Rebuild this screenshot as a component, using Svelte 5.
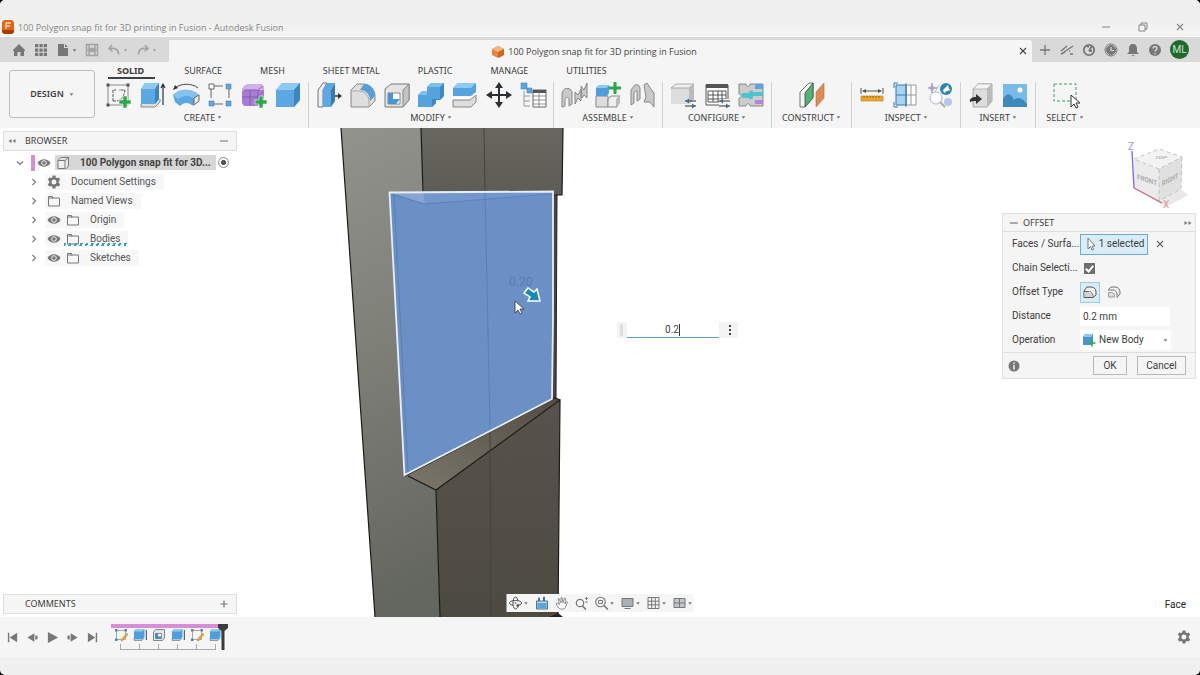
<script lang="ts">
	interface ToolGroup {
		label: string;
		tools: string[];
	}

	interface TreeNode {
		label: string;
		icon: string;
		eye?: boolean;
		pending?: boolean;
	}

	const tabs = ['SOLID', 'SURFACE', 'MESH', 'SHEET METAL', 'PLASTIC', 'MANAGE', 'UTILITIES'];
	let activeTab = $state('SOLID');

	const groups: ToolGroup[] = [
		{ label: 'CREATE', tools: ['sketch', 'extrude', 'revolve', 'pattern', 'form', 'box'] },
		{ label: 'MODIFY', tools: ['presspull', 'fillet', 'shell', 'combine', 'split', 'move', 'params'] },
		{ label: 'ASSEMBLE', tools: ['joint', 'component', 'asbuilt'] },
		{ label: 'CONFIGURE', tools: ['configure', 'table', 'puzzle'] },
		{ label: 'CONSTRUCT', tools: ['plane'] },
		{ label: 'INSPECT', tools: ['measure', 'section', 'analysis'] },
		{ label: 'INSERT', tools: ['derive', 'image'] },
		{ label: 'SELECT', tools: ['select'] }
	];

	const tree: TreeNode[] = [
		{ label: 'Document Settings', icon: 'gear' },
		{ label: 'Named Views', icon: 'folder' },
		{ label: 'Origin', icon: 'folder', eye: true },
		{ label: 'Bodies', icon: 'folder', eye: true, pending: true },
		{ label: 'Sketches', icon: 'folder', eye: true }
	];

	const accountTools = ['plus', 'extensions', 'jobs', 'clock', 'bell', 'help'];
	const playback = ['first', 'prev', 'play', 'next', 'last'];
	const features = ['fsketch', 'fextrude', 'fshell', 'fextrude', 'fsketch', 'fextrude'];
	const navTools = [
		{ name: 'orbit', menu: true },
		{ name: 'lookat', menu: false },
		{ name: 'pan', menu: false },
		{ name: 'zoom', menu: false },
		{ name: 'fit', menu: true },
		{ name: 'display', menu: true },
		{ name: 'grid', menu: true },
		{ name: 'viewports', menu: true }
	];

	let chain = $state(true);
	let distance = $state('0.2 mm');
	let quickValue = $state('0.2');
	let operation = $state('New Body');
</script>

{#snippet caret()}
	<svg class="caret" viewBox="0 0 6 6"><path d="M0.8 1.5h4.4L3 4.6z" fill="currentColor" /></svg>
{/snippet}

{#snippet tool(name: string)}
	<svg class="tool-icon" viewBox="0 0 26 26" fill="none" stroke-linejoin="round">
		{#if name === 'sketch'}
			<path d="M3 3h20v20H3z" stroke="#8a8a8a" />
			<path d="M8 19V8h3M8 19h4c5-1 7-5 8-11h-6" stroke="#555" stroke-dasharray="3 1" />
			<path d="M1.500 1.500h3v3h-3zM21.500 1.500h3v3h-3zM1.500 21.500h3v3h-3z" fill="#555" />
			<path d="M18 14h4v4h4v4h-4v4h-4v-4h-4v-4h4z" fill="#2ba84a" stroke="#f5f5f5" stroke-width=".6" />
		{:else if name === 'extrude'}
			<path d="M2 22v3h14l5-5v-3" fill="#ddd" stroke="#888" />
			<path d="M2 7l4-6h14v16l-4 5H2z" fill="#5ba8e2" />
			<path d="M2 7l4-6h14l-4 6z" fill="#8dcaf2" />
			<path d="M16 7l4-6v16l-4 5z" fill="#3b84bf" />
			<path d="M24 23V3M22 6l2-4 2 4" stroke="#333" stroke-width="1.200" />
		{:else if name === 'revolve'}
			<path d="M2 6c6-5 17-5 23 0" stroke="#444" />
			<path d="M0 8l2-5 3 3z" fill="#333" />
			<path d="M0 13c7-7 19-7 26 0l-6 11c-4-4-9-4-13 0l-5-4z" fill="#5ba8e2" />
			<path d="M0 13c7-7 19-7 26 0l-5 4c-4-4-11-4-16 0z" fill="#83c3ee" />
			<path d="M21 16l5-3v6l-5 4z" fill="#eee" stroke="#666" />
		{:else if name === 'pattern'}
			<path d="M4 7v12M7 4h12M22 7v12M7 22h12" stroke="#666" stroke-dasharray="9 3" />
			<path d="M2 2h5v5H2z" fill="#fff" stroke="#666" />
			<path d="M19 2h5v5h-5zM2 19h5v5H2zM19 19h5v5h-5z" fill="#61a5dc" stroke="#4a88bb" stroke-width=".6" />
		{:else if name === 'form'}
			<path d="M1 9c0-4 4-7 8-7h9c4 0 5 3 5 6v7c0 5-4 9-8 9H5c-3 0-4-2-4-4z" fill="#a97bd3" />
			<path d="M1 9c0-4 4-7 8-7h9c4 0 5 3 5 6l-6 0H5z" fill="#cfb0e8" />
			<path d="M3 8h13c1 0 1 1 1 1v14M9 8v15M1 15h16l5-5M17 8l5-4" stroke="#7a54a8" stroke-width=".8" />
			<path d="M18 14h4v4h4v4h-4v4h-4v-4h-4v-4h4z" fill="#2ba84a" stroke="#f5f5f5" stroke-width=".6" />
		{:else if name === 'box'}
			<path d="M1 8l6-7h18v17l-6 7H1z" fill="#5ba8e2" />
			<path d="M1 8l6-7h18l-6 7z" fill="#8dcaf2" />
			<path d="M19 8l6-7v17l-6 7z" fill="#3c86c2" />
		{:else if name === 'presspull'}
			<path d="M2 8l5-7h4L7 8v17H2z" fill="#eee" stroke="#777" />
			<path d="M7 8l4-7h8l-4 7v17H7z" fill="#5ba8e2" />
			<path d="M15 8l4-7v18l-4 6z" fill="#3878b0" />
			<path d="M19 14h5" stroke="#333" stroke-width="1.500" />
			<path d="M22 11l4 3-4 3z" fill="#333" />
		{:else if name === 'fillet'}
			<path d="M1 8l6-6h6c7 0 12 6 12 12v5l-6 6H1z" fill="#dedede" stroke="#888" />
			<path d="M1 9h8c6 0 10 5 10 10v5" stroke="#aaa" />
			<path d="M10 8l4-6c7 0 11 6 11 12l-5 5c0-7-4-11-10-11z" fill="#55a0da" />
		{:else if name === 'shell'}
			<path d="M1 7l6-5h18v16l-6 7H1z" fill="#e4e4e4" stroke="#777" />
			<path d="M19 8l6-6v16l-6 7z" fill="#c4c4c4" stroke="#888" />
			<path d="M4 11h12v11H4z" fill="#fff" stroke="#888" />
			<path d="M4 11h5v6h7l-4 5H4z" fill="#4795d2" />
		{:else if name === 'combine'}
			<path d="M0 13l4-4h5V5l4-4h13v13l-4 4h-4v3l-4 4H0z" fill="#55a3de" />
			<path d="M0 13l4-4h5V5l4-4h13l-4 4H9v8z" fill="#80c0ed" />
			<path d="M22 5l4-4v13l-4 4h-4v3l-4 4v-8h8z" fill="#3d88c5" />
		{:else if name === 'split'}
			<path d="M1 6l5-5h18v9l-5 4H1z" fill="#55a3de" />
			<path d="M1 6l5-5h18l-5 5z" fill="#8dcaf2" />
			<path d="M1 18h17l6-5v7l-5 5H1z" fill="#ddd" stroke="#888" />
			<path d="M0 16h18l7-5" stroke="#fff" stroke-width="1.500" />
		{:else if name === 'move'}
			<path d="M13 3v20M3 13h20" stroke="#2c2f33" stroke-width="2" />
			<path d="M13 0l4 6H9zM13 26l4-6H9zM0 13l6-4v8zM26 13l-6-4v8z" fill="#2c2f33" />
		{:else if name === 'params'}
			<path d="M1 1h6v6H1zM7 6h5v5H7z" fill="#5ca4dc" stroke="#4a88bb" stroke-width=".6" />
			<path d="M4 9v15h6M4 14h6M4 19h6" stroke="#999" />
			<path d="M13 8h13v17H13z" fill="#fff" stroke="#666" />
			<path d="M13 8h13v3H13z" fill="#555" />
			<path d="M13 14h13M13 18h13M13 22h13M19 10v15" stroke="#777" stroke-width=".8" />
		{:else if name === 'joint'}
			<path d="M1 25V12c0-6 8-8 10-2v12l-3 2v-7c-1-2-3-2-4 0v7z" fill="#c9c9c9" stroke="#888" />
			<path d="M14 10l3 3 3-6v12l-3-3-3 6zM20 4l3 4 3-7v15l-3-3-2 3z" fill="#c9c9c9" stroke="#888" />
		{:else if name === 'component'}
			<path d="M1 14h12v11H1z" fill="#ddd" stroke="#888" />
			<path d="M13 17l3-3h9l-3 3v8h-9z" fill="#eee" stroke="#888" />
			<path d="M22 17l3-3v7l-3 4z" fill="#bbb" />
			<path d="M1 6l3-3h10v8l-2 3H1z" fill="#4f9edb" />
			<path d="M1 6l3-3h10l-2 3z" fill="#8dcaf2" />
			<path d="M18.500 0h3v4.500H26v3h-4.500V12h-3V7.500H14v-3h4.500z" fill="#2ba84a" />
		{:else if name === 'asbuilt'}
			<path d="M2 23V8l4-5c3-1 5 1 5 4v10l-3 2V9c-2-1-3 1-3 4v8z" fill="#c9c9c9" stroke="#888" />
			<path d="M15 3l3-2 4 6 3 4v14l-4-5h-6l2-5z" fill="#c9c9c9" stroke="#888" />
		{:else if name === 'configure'}
			<path d="M1 6l5-4h18v15l-5 5H1z" fill="#ddd" />
			<path d="M1 6l5-4h18l-5 4z" fill="#eee" stroke="#999" stroke-width=".8" />
			<path d="M19 6l5-4v15l-5 5z" fill="#bbb" />
			<path d="M15 19h11M15 24h11" stroke="#333" stroke-width="1.200" />
			<path d="M19 16.500v5L15.500 19zM22 21.500v5l3.500-2.500z" fill="#3a6f99" />
		{:else if name === 'table'}
			<path d="M2 3h22v20H2z" fill="#fff" stroke="#555" />
			<path d="M2 2h22v4H2z" fill="#555" />
			<path d="M4 9h18v11H4zM4 13h18M4 17h18M9 9v11M14 9v11M18 9v11" stroke="#555" />
			<path d="M15 17h11v9H15z" fill="#f5f5f5" />
			<path d="M15 19h11M15 24h11" stroke="#333" stroke-width="1.200" />
			<path d="M19 16.500v5L15.500 19zM22 21.500v5l3.500-2.500z" fill="#3a6f99" />
		{:else if name === 'puzzle'}
			<path d="M1 2h7c0 3 4 3 4 0h13v22H12c0-3-4-3-4 0H1v-8c3 0 3-4 0-4z" fill="#ccc" stroke="#888" />
			<path d="M17 2h8v5h-8z" fill="#5fa3da" />
			<path d="M5 11h6c0-3 4-3 4-1h10v4H15c1 4-4 4-4 2H5c-2 0-2-5 0-5z" fill="#4cc4d0" />
			<path d="M17 18h8v4h-8z" fill="#b384d8" />
		{:else if name === 'plane'}
			<path d="M1 10l9-9h4v14l-8 10H1z" fill="#f4f4f4" stroke="#777" />
			<path d="M6 11l8-10v15l-8 9z" fill="#4db676" stroke="#444" stroke-width=".8" />
			<path d="M17 10l8-9v15l-8 9z" fill="#df8a55" stroke="#b66b3c" stroke-width=".6" />
		{:else if name === 'measure'}
			<path d="M2 6v6M24 6v6M4 9h18" stroke="#555" />
			<path d="M3 9l4-2v4zM23 9l-4-2v4z" fill="#555" />
			<path d="M2 14h22v5H2z" fill="#eda52d" stroke="#bb7d1a" stroke-width=".6" />
			<path d="M5 14v2M8 14v2M11 14v2M14 14v2M17 14v2M20 14v2" stroke="#8a5b0d" stroke-width=".8" />
		{:else if name === 'section'}
			<path d="M13 3h10v20H13zM13 13h10M18 3v20" fill="#fff" stroke="#999" />
			<path d="M3 3h10v20H3zM3 13h10" fill="#a8d4f5" stroke="#3879ad" />
			<path d="M13 1v24M1 6V1h4M1 20v5h4" stroke="#3879ad" />
		{:else if name === 'analysis'}
			<path d="M5 1l1 4 4 1-4 1-1 4-1-4-3-1 3-1zM12 3l-4 7" fill="#a8a0d0" stroke="#a8a0d0" stroke-width=".8" />
			<circle cx="9" cy="16" r="6" fill="#fff" stroke="#b7b7c4" />
			<path d="M13 20l5 5" stroke="#aaa" stroke-width="2" />
			<circle cx="19" cy="7" r="6" fill="#2c86ad" />
			<path d="M16 8l5-5 1 4 2 1-4 1-3 2z" fill="#fff" />
			<circle cx="21" cy="20" r="4" fill="#b9c8e6" />
		{:else if name === 'derive'}
			<path d="M5 7l5-5h14v17l-5 6H5z" fill="#ddd" stroke="#999" stroke-width=".8" />
			<path d="M19 7l5-5v17l-5 6z" fill="#bbb" />
			<path d="M5 7l5-5h14l-5 5z" fill="#f5f5f5" stroke="#999" stroke-width=".6" />
			<path d="M2 20c-1-3 2-5 6-5v-3l6 5-6 5v-3c-3 0-4 0-6 1z" fill="#333" />
		{:else if name === 'image'}
			<path d="M1 2h24v23H1z" fill="#78bbea" />
			<path d="M1 25V17c4-8 9-5 11 1 4-4 9-2 13 4v3z" fill="#3e88bd" />
			<circle cx="18" cy="8" r="2.500" fill="#fff" />
		{:else if name === 'select'}
			<path d="M2 2h22v17H2z" stroke="#4a9b65" stroke-dasharray="3 2" />
			<path d="M19 13v12l3-3 2 4 2-1-2-4h4z" fill="#fff" stroke="#333" />
		{/if}
	</svg>
{/snippet}

{#snippet icon(name: string)}
	<svg class="icon" viewBox="0 0 14 14" fill="none" stroke="currentColor">
		{#if name === 'home'}
			<path d="M1 7l6-6 6 6v1h-1v5H8.500V9h-3v4H2V8H1z" fill="currentColor" stroke="none" />
		{:else if name === 'apps'}
			<path d="M1 1h3.300v3.300H1zM5.400 1h3.300v3.300H5.400zM9.700 1H13v3.300H9.700zM1 5.400h3.300v3.300H1zM5.400 5.400h3.300v3.300H5.400zM9.700 5.400H13v3.300H9.700zM1 9.700h3.300V13H1zM5.400 9.700h3.300V13H5.400zM9.700 9.700H13V13H9.700z" fill="currentColor" stroke="none" />
		{:else if name === 'file'}
			<path d="M2 1h6v4h4v8H2zM9 1l3 3H9z" fill="currentColor" stroke="none" />
		{:else if name === 'save'}
			<path d="M1.500 1.500h11v11h-11zM4 1.500v4h6v-4M4 12.500v-4h6v4M1.500 7h11" stroke-width="1.500" />
		{:else if name === 'undo'}
			<path d="M5 2L2 5.500 5.500 8M2.500 5.500c6-1 9 1 9 6" stroke-width="1.600" />
		{:else if name === 'redo'}
			<path d="M9 2l3 3.500L8.500 8M11.500 5.500c-6-1-9 1-9 6" stroke-width="1.600" />
		{:else if name === 'close'}
			<path d="M4 4l6 6M10 4l-6 6" stroke-width="1.100" />
		{:else if name === 'minus'}
			<path d="M3 7h8" stroke-width="1.200" />
		{:else if name === 'restore'}
			<path d="M3 5h6v6H3zM5 5V3h6v6H9" />
		{:else if name === 'plus'}
			<path d="M7 2v10M2 7h10" stroke-width="1.300" />
		{:else if name === 'smallplus'}
			<path d="M7 3.500v7M3.500 7h7" stroke-width="1.200" />
		{:else if name === 'extensions'}
			<path d="M1 8l6-5M4 9l9-6M1 11l4-2M10 11h3M9 8h1" stroke-width="1.500" />
		{:else if name === 'jobs'}
			<circle cx="7" cy="7" r="5.200" stroke-width="1.800" />
			<path d="M7 8l3-5M4 3l3 1M7 8l3 0" stroke-width="1.800" />
		{:else if name === 'clock'}
			<circle cx="7" cy="7" r="6" />
			<circle cx="7" cy="7" r="4.500" fill="currentColor" />
			<path d="M7 4v3.500h3" stroke="#d9d9d9" stroke-width="1.200" />
		{:else if name === 'bell'}
			<path d="M7 1c3 0 4 2 4 5v3l2 2H1l2-2V6c0-3 1-5 4-5zM5.500 12h3L7 13.500z" fill="currentColor" stroke="none" />
		{:else if name === 'help'}
			<circle cx="7" cy="7" r="6" fill="currentColor" stroke="none" />
			<path d="M5 5.500C5 3 9 3 9 5.300 9 7 7 6.800 7 8.500M7 10v1.200" stroke="#e5e5e5" stroke-width="1.300" />
		{:else if name === 'collapse'}
			<path d="M6.500 5v4L3.500 7zM10.500 5v4l-3-2z" fill="currentColor" stroke="none" />
		{:else if name === 'expand'}
			<path d="M3.500 5v4l3-2zM7.500 5v4l3-2z" fill="currentColor" stroke="none" />
		{:else if name === 'down'}
			<path d="M4 5.500l3 3 3-3" stroke-width="1.200" />
		{:else if name === 'right'}
			<path d="M5.500 4l3 3-3 3" stroke-width="1.100" />
		{:else if name === 'eye'}
			<path d="M.5 7c3-5 10-5 13 0-3 5-10 5-13 0z" fill="currentColor" stroke="none" />
			<circle cx="7" cy="7" r="2.300" stroke="#f2f2f2" />
		{:else if name === 'gear'}
			<path d="M5.600.5h2.800l.4 1.900 1.200.6 1.800-.6 1.400 2.300-1.400 1.300v2l1.400 1.300-1.400 2.300-1.800-.6-1.200.6-.4 1.900H5.600l-.4-1.900-1.200-.6-1.800.6L.8 9.300 2.200 8V6L.8 4.700l1.400-2.300 1.800.6 1.200-.6zM7 4.500a2.500 2.500 0 100 5 2.500 2.500 0 000-5z" fill="currentColor" fill-rule="evenodd" stroke="none" />
		{:else if name === 'folder'}
			<path d="M1.500 4V2.500h4V4h7v8h-11zM1.500 4h5" />
		{:else if name === 'part'}
			<path d="M2 4.500L5 1.500h7.500V8c0 3-1 4.500-4 4.500H2zM2 4.500h6.500c1 0 1.500 0 4-3M9 4.500v8" fill="#eee" />
		{:else if name === 'first'}
			<path d="M2 2h1.500v10H2zM12 2v10L4 7z" fill="currentColor" stroke="none" />
		{:else if name === 'prev'}
			<path d="M9 2.500v9L1.500 7zM10 4.500l2.500.8v3.400l-2.500.8z" fill="currentColor" stroke="none" />
		{:else if name === 'play'}
			<path d="M2 1l11 6-11 6z" fill="currentColor" stroke="none" />
		{:else if name === 'next'}
			<path d="M5 2.500v9L12.500 7zM4 4.500l-2.500.8v3.400l2.500.8z" fill="currentColor" stroke="none" />
		{:else if name === 'last'}
			<path d="M10.500 2H12v10h-1.500zM2 2v10l8-5z" fill="currentColor" stroke="none" />
		{:else if name === 'fsketch'}
			<path d="M2.500 2.500h9v9h-9z" stroke="#aaa" />
			<path d="M1 1h2.500v2.500H1zM10.500 1H13v2.500h-2.500zM1 10.500h2.500V13H1z" fill="#5a84a8" stroke="none" />
			<path d="M13 5l1 1.500-5 6-2 .5.500-2z" fill="#e8a436" stroke="#b57d28" stroke-width=".4" />
		{:else if name === 'fextrude'}
			<path d="M1 10.500v2h8l2-2" stroke="#999" />
			<path d="M1 3.500L3 1h8.500v8l-2 2.500H1z" fill="#4f9edb" stroke="none" />
			<path d="M1 3.500L3 1h8.500l-2 2.500z" fill="#8dc9f0" stroke="none" />
			<path d="M13.300 2v10" stroke="#444" />
		{:else if name === 'fshell'}
			<path d="M1.500 4l2-2.500h9V10l-2 2.500h-9z" fill="#e5e5e5" stroke="#7c8894" />
			<path d="M3.500 5.500h6v5h-6z" fill="#fff" stroke="#7c8894" />
			<path d="M3.500 5.500h2.500v3h3v2h-5.500z" fill="#3f88c0" stroke="none" />
		{:else if name === 'orbit'}
			<path d="M4.500 9.300C2.500 8.900 1 8 1 7c0-1.500 2.700-2.500 6-2.500s6 1 6 2.500-2 2.300-4.500 2.500" stroke="#444" />
			<path d="M9.300 4.500C8.900 2.500 8 1 7 1 5.500 1 4.500 3.700 4.500 7s1 6 2.500 6c1 0 1.800-1 2.200-2.500" stroke="#444" />
			<path d="M10 7.500v4L7.500 9.500z" fill="#444" stroke="none" />
			<circle cx="7" cy="7" r=".8" fill="#444" stroke="none" />
		{:else if name === 'lookat'}
			<path d="M2 13V5h11v8zM4 5V2h1v3M9 5V1h1v4" fill="#b7dbf2" stroke="#4d7186" />
			<path d="M3 7h9v5H3z" fill="#5aa3d8" stroke="none" />
		{:else if name === 'pan'}
			<path d="M4 12L1.500 7.500l1-.5L5 8.500 3.500 3l1-.5L6.500 7V1.500h1L8.500 7l1.500-5 1 .3L10.500 8 12 5.500l1 .5-2 5-1.500 2h-4z" fill="#fff" stroke="#777" stroke-width=".8" />
		{:else if name === 'zoom'}
			<circle cx="5.500" cy="7" r="3.700" stroke="#777" stroke-width="1.200" />
			<path d="M8 10l3.500 3.500" stroke="#777" stroke-width="1.600" />
			<path d="M10.500 2.500h3M12 1v3M10.500 6h3" stroke="#666" stroke-width=".8" />
		{:else if name === 'fit'}
			<circle cx="6" cy="6" r="4.800" stroke="#777" stroke-width="1.100" />
			<path d="M4 4.500h4v3H4z" stroke="#777" />
			<path d="M9.500 9.500l4 4" stroke="#777" stroke-width="1.600" />
		{:else if name === 'display'}
			<path d="M1.500 2.500h11v8h-11z" fill="#a9b0b4" stroke="#777" />
			<path d="M4 12.500h6" stroke="#777" stroke-width="1.200" />
		{:else if name === 'grid'}
			<path d="M1.500 1.500h11v11h-11zM5.200 1.500v11M8.800 1.500v11M1.500 5.200h11M1.500 8.800h11" stroke="#777" />
		{:else if name === 'viewports'}
			<path d="M1.500 2.500h11v9h-11z" fill="#c3c6c8" stroke="#777" />
			<path d="M7 2.500v9M1.500 7h11" stroke="#777" />
		{:else if name === 'pointer'}
			<path d="M4 1v11l2.500-2.500L8 13l1.500-.7L8.200 9H11z" fill="#fff" stroke="#777" />
		{:else if name === 'rounded'}
			<path d="M1 6l3-4h4c3 0 5 2 5 5v3l-3 2.500H1z" fill="#f0f0f0" stroke="#555" />
			<path d="M1 6.500h4.500c3 0 4.500 2 4.500 6" stroke="#666" />
			<path d="M1.500 7h4c2.500 0 4 2 4 5h-8z" fill="#d3d3d3" stroke="none" />
		{:else if name === 'sharp'}
			<path d="M1 5l3-3h4c3 0 5 2 5 5v2l-3 3.500V9C10 7 8 5 6 5z" fill="#eee" stroke="#777" />
			<path d="M1.500 7.500h3c2 0 3 1.500 3 4.500h-6z" fill="#ddd" stroke="#999" />
		{:else if name === 'newbody'}
			<path d="M1 4l2-3h8v7l-2 4H1z" fill="#4796d2" stroke="none" />
			<path d="M1 4l2-3h8L9 4z" fill="#8dc9f0" stroke="none" />
			<path d="M10 6.500v7M6.500 10h7" stroke="#2ba84a" stroke-width="1.600" />
		{:else if name === 'info'}
			<circle cx="7" cy="7" r="5.500" fill="currentColor" stroke="none" />
			<path d="M7 3.500v1.500M7 6v4.500" stroke="#f0f0f0" stroke-width="1.500" />
		{:else if name === 'dots'}
			<path d="M6 2h2v2H6zM6 6h2v2H6zM6 10h2v2H6z" fill="currentColor" stroke="none" />
		{/if}
	</svg>
{/snippet}

<div class="window">
	<header class="title-bar">
		<svg class="logo" viewBox="0 0 12 14">
			<path d="M2 0h8l2 2v10l-2 2H2l-2-2V2z" fill="#e8650f" />
			<path d="M0 10h12v2l-2 2H2l-2-2z" fill="#a63c06" />
			<path d="M4 9V3h5M4 6h4" fill="none" stroke="#fbd9bd" stroke-width="1.300" />
		</svg>
		<span class="window-title">100 Polygon snap fit for 3D printing in Fusion - Autodesk Fusion</span>
		<div class="window-buttons">
			<button aria-label="Minimize">{@render icon('minus')}</button>
			<button aria-label="Restore">{@render icon('restore')}</button>
			<button aria-label="Close">{@render icon('close')}</button>
		</div>
	</header>

	<div class="doc-strip">
		<div class="quick-access">
			<button aria-label="Home">{@render icon('home')}</button>
			<button aria-label="Data panel">{@render icon('apps')}</button>
			<button aria-label="File">{@render icon('file')}{@render caret()}</button>
			<button class="faded" aria-label="Save">{@render icon('save')}</button>
			<button class="faded" aria-label="Undo">{@render icon('undo')}{@render caret()}</button>
			<button class="faded" aria-label="Redo">{@render icon('redo')}{@render caret()}</button>
		</div>
		<div class="doc-tab">
			<div class="doc-name">
				<svg class="doc-icon" viewBox="0 0 12 12">
					<path d="M6 0l6 3v6l-6 3-6-3V3z" fill="#e48a3c" />
					<path d="M6 0l6 3-6 3-6-3z" fill="#f5b478" />
					<path d="M6 6l6-3v6l-6 3z" fill="#c96a22" />
				</svg>
				<span>100 Polygon snap fit for 3D printing in Fusion</span>
			</div>
			<button aria-label="Close document">{@render icon('close')}</button>
		</div>
		<div class="account">
			{#each accountTools as name}
				<button aria-label={name}>{@render icon(name)}</button>
			{/each}
			<button class="avatar">ML</button>
		</div>
	</div>

	<div class="ribbon">
		<button class="workspace">DESIGN {@render caret()}</button>
		<div class="ribbon-main">
			<nav class="tabs">
				{#each tabs as tab}
					<button class="tab" class:active={tab === activeTab} onclick={() => (activeTab = tab)}>{tab}</button>
				{/each}
			</nav>
			<div class="groups">
				{#each groups as group}
					<section class="group">
						<div class="tools">
							{#each group.tools as name}
								<button aria-label={name}>{@render tool(name)}</button>
							{/each}
						</div>
						<button class="group-label">{group.label} {@render caret()}</button>
					</section>
				{/each}
			</div>
		</div>
	</div>

	<main class="canvas">
		<svg class="model" viewBox="0 0 1200 489" preserveAspectRatio="xMidYMin slice">
			<defs>
				<linearGradient id="side" x1="0" y1="0" x2="0.1" y2="1">
					<stop offset="0" stop-color="#92938c" />
					<stop offset="0.5" stop-color="#7d7e76" />
					<stop offset="1" stop-color="#646660" />
				</linearGradient>
				<linearGradient id="upper" x1="0" y1="0" x2="0" y2="1">
					<stop offset="0" stop-color="#67675f" />
					<stop offset="1" stop-color="#5b5a53" />
				</linearGradient>
				<linearGradient id="ledge" x1="0" y1="1" x2="1" y2="0">
					<stop offset="0" stop-color="#7b776b" />
					<stop offset="1" stop-color="#514d43" />
				</linearGradient>
				<linearGradient id="front" x1="0" y1="0" x2="0" y2="1">
					<stop offset="0" stop-color="#57534a" />
					<stop offset="1" stop-color="#4d4a42" />
				</linearGradient>
			</defs>
			<path d="M341 0h81l3 76-17 272 28 14 4 127h-65z" fill="url(#side)" />
			<path d="M421 0h142l-1 67h-6l-132 9z" fill="url(#upper)" />
			<path d="M553 67h4l-1 204-4 1z" fill="#4b463d" stroke="#24221e" />
			<path d="M405 347l150-77 5 2-124 90z" fill="url(#ledge)" />
			<path d="M436 362l124-90-2 217H440z" fill="url(#front)" />
			<path d="M341 0l34 489M421 0l2 64M563 0l-1 67h-6M408 348l28 14 124-90-5-2-150 78M436 362l4 127M560 272l-2 217" fill="none" stroke="#1b1b19" stroke-width="1.200" />
			<path d="M484 0l1 64M490 304l1 185" stroke="#45433d" fill="none" />
			<path d="M549 489l9-4 5 4z" fill="#222" />
			<path d="M389 64l164-1v127l-1 81-148 76z" fill="#6a90c5" />
			<path d="M389 64l164-1v4l-128 9z" fill="#7396cd" />
			<path d="M389 64h34l2 12z" fill="#87a4d2" />
			<path d="M391 66l34 10 128-10M394 67l14 278M485 64l5 237" fill="none" stroke="#5079b8" stroke-width=".7" />
			<path d="M389.500 64.500L553 63.500V190l-1 81-147.500 76z" fill="none" stroke="#e9eef4" stroke-width="1.800" />
			<text x="509" y="158" class="ghost">0.20</text>
			<path d="M524 165l4-5 6 4 3-3 3 12-12 0 2-4z" fill="#198cad" stroke="#fff" stroke-width="1.500" />
			<path d="M515 173v12l3-3 2 4 2-1-2-4h4z" fill="#fff" stroke="#333" stroke-width=".8" />
		</svg>

		<aside class="left-dock">
			<section>
				<h2 class="panel-head">
					{@render icon('collapse')}
					<span>BROWSER</span>
					<button aria-label="Collapse browser">{@render icon('minus')}</button>
				</h2>
				<ul class="tree">
					<li class="root">
						<button aria-label="Collapse">{@render icon('down')}</button>
						<i class="marker"></i>
						{@render icon('eye')}
						<div class="root-name">
							{@render icon('part')}
							<span>100 Polygon snap fit for 3D...</span>
						</div>
						<input type="radio" checked aria-label="Activate component" />
					</li>
					{#each tree as node}
						<li>
							<button aria-label="Expand">{@render icon('right')}</button>
							<div class="node">
								{#if node.eye}{@render icon('eye')}{/if}
								<span class="node-name" class:pending={node.pending}>
									{@render icon(node.icon)}
									<span>{node.label}</span>
								</span>
							</div>
						</li>
					{/each}
				</ul>
			</section>
			<h2 class="panel-head comments">
				<span>COMMENTS</span>
				<button aria-label="Add comment">{@render icon('smallplus')}</button>
			</h2>
		</aside>

		<form class="value-box" onsubmit={(e) => e.preventDefault()}>
			<i class="grip"></i>
			<div class="value">
				<input aria-label="Offset distance" bind:value={quickValue} />
				<i class="text-cursor"></i>
			</div>
			<button type="button" aria-label="More">{@render icon('dots')}</button>
		</form>

		<div class="nav-bar">
			{#each navTools as item}
				<button aria-label={item.name}>{@render icon(item.name)}{#if item.menu}{@render caret()}{/if}</button>
			{/each}
		</div>

		<aside class="right-dock">
			<svg class="view-cube" viewBox="0 0 72 72">
				<path d="M16 50l30 18 22-12-10-8z" fill="#dedede" opacity=".7" />
				<path d="M14 20l25-10 23 8-1 32-22 12-25-13z" fill="#f3f3f3" />
				<path d="M14 20l25 10v32L14 49z" fill="#ebebeb" />
				<path d="M39 30l23-12-1 32-22 12z" fill="#e0e0e0" />
				<path d="M14 20l25-10 23 8-23 12zM39 30v32M62 18l-1 32-22 12" fill="none" stroke="#b8b8b8" stroke-width=".8" stroke-dasharray="4 3" />
				<path d="M12 12l2 37" stroke="#7a74dd" stroke-width="1.400" />
				<path d="M14 49l28 15" stroke="#c66a78" stroke-width="1.400" />
				<text x="8" y="11" class="axis-z">Z</text>
				<text x="43" y="69" class="axis-x">X</text>
				<text transform="matrix(.9 .3 0 1 17 40)" class="face">FRONT</text>
				<text transform="matrix(.8 -.4 0 1 42 47)" class="face">RIGHT</text>
				<text transform="matrix(.9 0 -.4 .5 34 20)" class="face">TOP</text>
			</svg>

			<form class="dialog" onsubmit={(e) => e.preventDefault()}>
				<h2>
					{@render icon('minus')}
					<span>OFFSET</span>
					{@render icon('expand')}
				</h2>
				<div class="field">
					<label for="faces">Faces / Surfa...</label>
					<button type="button" id="faces" class="selection">{@render icon('pointer')}1 selected</button>
					<button type="button" class="clear" aria-label="Clear selection">{@render icon('close')}</button>
				</div>
				<div class="field">
					<label for="chain">Chain Selecti...</label>
					<input type="checkbox" id="chain" bind:checked={chain} />
				</div>
				<div class="field">
					<span class="field-name">Offset Type</span>
					<button type="button" class="type on" aria-label="Rounded">{@render icon('rounded')}</button>
					<button type="button" class="type" aria-label="Sharp">{@render icon('sharp')}</button>
				</div>
				<div class="field">
					<label for="distance">Distance</label>
					<input type="text" id="distance" bind:value={distance} />
				</div>
				<div class="field">
					<label for="operation">Operation</label>
					<div class="dropdown">
						{@render icon('newbody')}
						<select id="operation" bind:value={operation}>
							<option>New Body</option>
							<option>Join</option>
						</select>
						{@render caret()}
					</div>
				</div>
				<footer>
					{@render icon('info')}
					<button type="submit">OK</button>
					<button type="button">Cancel</button>
				</footer>
			</form>

			<p class="status">Face</p>
		</aside>
	</main>

	<footer class="timeline">
		<div class="playback">
			{#each playback as name}
				<button aria-label={name}>{@render icon(name)}</button>
			{/each}
		</div>
		<div class="track">
			<ol>
				{#each features as name}
					<li>{@render icon(name)}</li>
				{/each}
			</ol>
			<svg class="playhead" viewBox="0 0 10 26">
				<path d="M0 0h10v4L6.500 7v19h-3V7L0 4z" fill="#3c3c3c" />
			</svg>
		</div>
		<button class="settings" aria-label="Timeline settings">{@render icon('gear')}</button>
	</footer>
</div>

<style>
	:global(body) {
		background: #000;
	}

	.window {
		display: flex;
		flex-direction: column;
		min-height: 100vh;
		border-radius: 5px;
		overflow: hidden;
		background: #f0f0f0;
		color: #3c3c3c;
		font: 10px/14px Roboto, 'Liberation Sans', sans-serif;
	}

	button,
	input,
	select {
		margin: 0;
		padding: 0;
		border: 0;
		background: none;
		color: inherit;
		font: inherit;
	}

	button {
		display: flex;
		align-items: center;
		justify-content: center;
	}

	h2,
	p,
	ul,
	ol {
		margin: 0;
		padding: 0;
		font: inherit;
		list-style: none;
	}

	.icon {
		width: 14px;
		height: 14px;
		flex: none;
	}

	.caret {
		width: 5px;
		height: 5px;
		flex: none;
		color: #777;
	}

	.title-bar {
		display: flex;
		align-items: center;
		height: 18px;
		padding: 18px 13px 0 2px;
		border-bottom: 1px solid #fff;
		background: linear-gradient(#f0f0f0 60%, #f4f4f4);
		color: #858585;
	}

	.logo {
		width: 12px;
		height: 14px;
	}

	.window-title {
		margin-left: 4px;
		padding-top: 2px;
		font: 9px/14px 'Open Sans', sans-serif;
	}

	.window-buttons {
		display: flex;
		gap: 23px;
		margin-left: auto;
	}

	.doc-strip {
		display: flex;
		height: 22px;
		padding-top: 3px;
		background: #d9d9d9;
		color: #777;
	}

	.quick-access {
		box-sizing: border-box;
		display: flex;
		align-items: center;
		gap: 8px;
		width: 169px;
		padding: 0 0 2px 12px;
	}

	.quick-access button {
		gap: 2px;
	}

	.faded,
	.faded .caret {
		color: #a3a3a3;
	}

	.doc-tab {
		display: flex;
		align-items: center;
		flex: 1;
		padding-right: 2px;
		border-radius: 0 3px 0 0;
		background: #f5f5f5;
		color: #444;
	}

	.doc-name {
		display: flex;
		align-items: center;
		justify-content: center;
		gap: 4px;
		flex: 1;
		padding: 1px 0 0 4px;
		font: 9px/14px 'Open Sans', sans-serif;
	}

	.doc-icon {
		width: 12px;
		height: 12px;
	}

	.account {
		display: flex;
		align-items: center;
		gap: 8px;
		padding: 0 11px 3px 6px;
	}

	.avatar {
		width: 19px;
		height: 19px;
		border-radius: 50%;
		background: #1c6b2a;
		color: #c9e6cd;
	}

	.ribbon {
		display: flex;
		gap: 3px;
		padding-left: 9px;
		background: #f5f5f5;
	}

	.workspace,
	.tab,
	.group-label,
	.panel-head,
	.dialog h2 {
		font: 9px/14px 'Noto Sans', sans-serif;
	}

	.workspace {
		gap: 5px;
		width: 86px;
		height: 48px;
		margin-top: 8px;
		border: 1px solid #bdbdbd;
		border-radius: 3px;
		font-weight: 600;
	}

	.tabs {
		display: flex;
		gap: 20px;
		padding-left: 10px;
	}

	.tab {
		height: 17px;
		padding: 2px 9px 0;
		border-bottom: 2px solid transparent;
	}

	.tab.active {
		padding: 2px 11px 0 9px;
		border-color: #3c4248;
		font-weight: 700;
	}

	.groups {
		display: flex;
		padding-top: 3px;
	}

	.group {
		padding: 0 7px;
		border-right: 1px solid #d2d2d2;
	}

	.group:last-child {
		border: 0;
	}

	.tools {
		display: flex;
		justify-content: center;
		gap: 8px;
	}

	.tool-icon {
		width: 26px;
		height: 26px;
		overflow: visible;
	}

	.group-label {
		gap: 2px;
		width: 100%;
		height: 20px;
		padding: 0 3px;
	}

	.group-label .caret {
		margin-top: -2px;
	}

	.canvas {
		position: relative;
		display: flex;
		flex: 1;
		justify-content: space-between;
		background: #fff;
	}

	.model {
		position: absolute;
		inset: 0;
		width: 100%;
		height: 100%;
	}

	.ghost {
		fill: #5c7db2;
		font-size: 12px;
	}

	.left-dock {
		position: relative;
		display: flex;
		flex-direction: column;
		justify-content: space-between;
		width: 234px;
		padding: 3px;
	}

	.panel-head {
		display: flex;
		align-items: center;
		height: 18px;
		padding: 0 5px 0 1px;
		border: 1px solid #dedede;
		background: #f5f5f5;
	}

	.panel-head span {
		margin-left: 6px;
	}

	.panel-head button {
		margin-left: auto;
	}

	.panel-head .icon {
		color: #777;
	}

	.panel-head.comments {
		padding-left: 15px;
	}

	.tree {
		padding-top: 2px;
		color: #555;
	}

	.tree li {
		display: flex;
		align-items: center;
		height: 19px;
		padding-left: 24px;
	}

	.tree .root {
		padding-left: 10px;
	}

	.marker {
		width: 4px;
		height: 16px;
		margin: 0 2px 0 4px;
		background: #d68fd6;
	}

	.root-name {
		display: flex;
		align-items: center;
		gap: 10px;
		width: 160px;
		height: 15px;
		margin: 0 2px 0 4px;
		padding-left: 1px;
		background: #d7d7d7;
		color: #444;
		font-weight: 700;
	}

	.root input {
		appearance: none;
		width: 11px;
		height: 11px;
		border: 1px solid #888;
		border-radius: 50%;
		background: radial-gradient(#555 35%, #fff 45%);
	}

	.node,
	.node-name {
		display: flex;
		align-items: center;
	}

	.node {
		gap: 5px;
		height: 16px;
		margin-left: 4px;
		padding: 0 8px 0 2px;
		background: #f7f7f7;
	}

	.node-name {
		position: relative;
		gap: 10px;
	}

	/* hatched strip over a node whose result is still being computed */
	.node-name.pending::after {
		content: '';
		position: absolute;
		right: -8px;
		bottom: 0;
		left: -2px;
		height: 3px;
		background: repeating-linear-gradient(115deg, #3a9dbb 0 2px, transparent 2px 5px);
	}

	.tree .icon {
		color: #777;
	}

	.value-box {
		position: absolute;
		top: 194px;
		left: calc(50% + 17px);
		display: flex;
		align-items: center;
		gap: 4px;
		height: 16px;
		padding: 0 1px 0 3px;
		background: #f3f3f3;
		color: #444;
	}

	.grip {
		width: 3px;
		height: 12px;
		background: #ddd;
	}

	.value {
		display: flex;
		align-items: center;
		width: 92px;
		height: 15px;
		border-bottom: 1px solid #5ba3c0;
		background: #fff;
	}

	.value input {
		width: 52px;
		text-align: right;
	}

	.text-cursor {
		width: 1px;
		height: 12px;
		background: #333;
	}

	.nav-bar {
		position: absolute;
		bottom: 5px;
		left: 50%;
		display: flex;
		align-items: center;
		gap: 6px;
		height: 18px;
		padding: 0 1px 0 2px;
		background: #f5f5f5;
		transform: translateX(-50%);
	}

	.nav-bar button {
		gap: 1px;
	}

	.right-dock {
		position: relative;
		display: flex;
		flex-direction: column;
		align-items: flex-end;
		width: 194px;
		padding: 11px 4px 5px 0;
	}

	.view-cube {
		width: 72px;
		height: 72px;
		margin: 0 4px 2px 0;
	}

	.axis-z {
		fill: #9d95e2;
		font-size: 10px;
	}

	.axis-x {
		fill: #e7909c;
		font-size: 10px;
	}

	.face {
		fill: #a6a6a6;
		font-size: 7px;
		font-weight: 600;
	}

	.dialog {
		box-sizing: border-box;
		width: 194px;
		border: 1px solid #e0e0e0;
		background: #f5f5f5;
	}

	.dialog h2 {
		display: flex;
		align-items: center;
		gap: 2px;
		height: 17px;
		padding: 0 0 0 4px;
		border-bottom: 1px solid #ddd;
	}

	.dialog h2 .icon {
		color: #777;
	}

	.dialog h2 .icon:last-child {
		margin-left: auto;
	}

	.field {
		display: flex;
		align-items: center;
		height: 24px;
		padding-left: 9px;
	}

	.field label,
	.field-name {
		width: 68px;
	}

	.selection {
		box-sizing: border-box;
		gap: 1px;
		width: 68px;
		height: 21px;
		border: 1px solid #6caace;
		background: #d9edf8;
	}

	.clear {
		margin-left: 5px;
		color: #666;
	}

	.field input[type='checkbox'] {
		appearance: none;
		width: 11px;
		height: 11px;
		margin-left: 4px;
		background: #6e6e6e;
	}

	.field input[type='checkbox']:checked::after {
		content: '';
		display: block;
		width: 3px;
		height: 6px;
		margin: 1px 0 0 3px;
		border: solid #fff;
		border-width: 0 2px 2px 0;
		transform: rotate(40deg);
	}

	.type {
		box-sizing: border-box;
		width: 20px;
		height: 21px;
		margin-right: 4px;
	}

	.type.on {
		border: 1px solid #9fcbe2;
		background: #d9edf8;
	}

	.field input[type='text'] {
		width: 87px;
		height: 19px;
		padding-left: 3px;
		background: #fff;
	}

	.dropdown {
		display: flex;
		align-items: center;
		width: 86px;
		height: 20px;
		padding: 0 3px 0 2px;
		background: #fff;
	}

	.dropdown select {
		appearance: none;
		flex: 1;
		min-width: 0;
		padding-left: 3px;
	}

	.dialog footer {
		display: flex;
		align-items: center;
		gap: 10px;
		height: 25px;
		padding: 0 9px 0 4px;
		border-top: 1px solid #e0e0e0;
		color: #777;
	}

	.dialog footer button {
		box-sizing: border-box;
		width: 34px;
		height: 19px;
		border: 1px solid #b8b8b8;
		color: #3c3c3c;
	}

	.dialog footer button:nth-of-type(1) {
		margin-left: auto;
	}

	.dialog footer button:nth-of-type(2) {
		width: 49px;
	}

	.status {
		margin: auto 10px 0 0;
		color: #222;
	}

	.timeline {
		display: flex;
		align-items: center;
		height: 40px;
		margin-bottom: 18px;
		padding: 0 9px 0 6px;
		background: #f5f5f5;
		color: #777;
	}

	.playback {
		display: flex;
		gap: 7px;
	}

	.playback .icon {
		width: 13px;
		height: 13px;
	}

	.track {
		display: flex;
		margin-left: 12px;
	}

	.track ol {
		display: flex;
		height: 22px;
		border-top: 4px solid #d68fd6;
	}

	.track li {
		display: flex;
		flex-direction: column;
		align-items: center;
		gap: 2px;
		width: 19px;
		background: linear-gradient(#aaa, #aaa) bottom / 100% 1px no-repeat;
	}

	.track li:first-child {
		background-position: right bottom;
		background-size: 50% 1px;
	}

	.track li:last-child {
		background-position: left bottom;
		background-size: 50% 1px;
	}

	.track li::after {
		content: '';
		width: 1px;
		height: 6px;
		background: #aaa;
	}

	.playhead {
		width: 10px;
		height: 26px;
		margin-left: -7px;
	}

	.settings {
		margin-left: auto;
	}
</style>
